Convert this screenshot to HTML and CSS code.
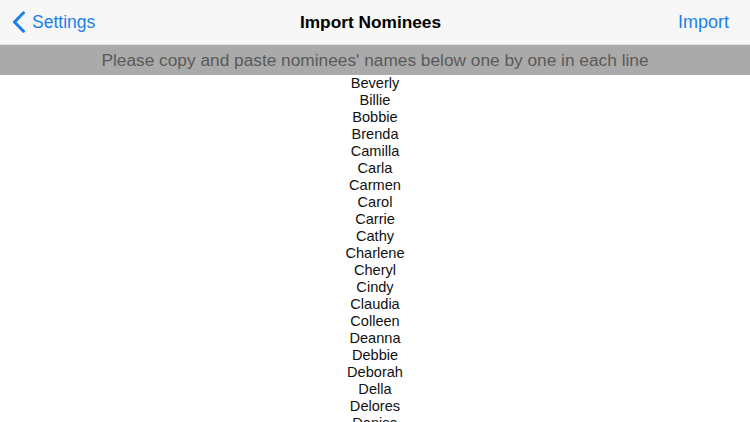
FILE: index.html
```html
<!DOCTYPE html>
<html>
<head>
<meta charset="utf-8">
<link rel="stylesheet" href="styles.css">
</head>
<body>
<div class="nav">
  <div class="back">
    <svg class="chev" width="14" height="22" viewBox="0 0 14 22"><path d="M11.5 1.8 L2.5 11 L11.5 20.2" fill="none" stroke="#1a7fe8" stroke-width="3" stroke-linecap="round" stroke-linejoin="round"/></svg>
    <span>Settings</span>
  </div>
  <div class="title">Import Nominees</div>
  <div class="action">Import</div>
</div>
<div class="banner">Please copy and paste nominees' names below one by one in each line</div>
<div class="list">
  <div>Beverly</div><div>Billie</div><div>Bobbie</div><div>Brenda</div><div>Camilla</div><div>Carla</div><div>Carmen</div><div>Carol</div><div>Carrie</div><div>Cathy</div><div>Charlene</div><div>Cheryl</div><div>Cindy</div><div>Claudia</div><div>Colleen</div><div>Deanna</div><div>Debbie</div><div>Deborah</div><div>Della</div><div>Delores</div><div>Denise</div>
</div>
</body>
</html>
```
FILE: styles.css
```css
html, body { margin: 0; padding: 0; }
body {
  width: 750px; height: 422px; overflow: hidden;
  background: #fff;
  font-family: "Liberation Sans", Arial, sans-serif;
}
.nav {
  height: 44px;
  background: #f7f7f7;
  border-bottom: 1px solid #e0e0e0;
  display: grid;
  grid-template-columns: 1fr auto 1fr;
  align-items: center;
  padding: 0 21px 0 12px;
}
.back {
  display: flex; align-items: center; gap: 6px;
  color: #1a7fe8; font-size: 17.5px;
}
.chev { display: block; }
.title { font-size: 17.3px; font-weight: bold; color: #000; }
.action { justify-self: end; color: #1a7fe8; font-size: 18px; }
.banner {
  height: 30px;
  background: #aaaaaa;
  color: #5a5a5a;
  font-size: 17.3px;
  display: flex; align-items: center; justify-content: center;
}
.list {
  text-align: center;
  font-size: 14.6px;
  line-height: 17px;
  color: #111;
}
```
